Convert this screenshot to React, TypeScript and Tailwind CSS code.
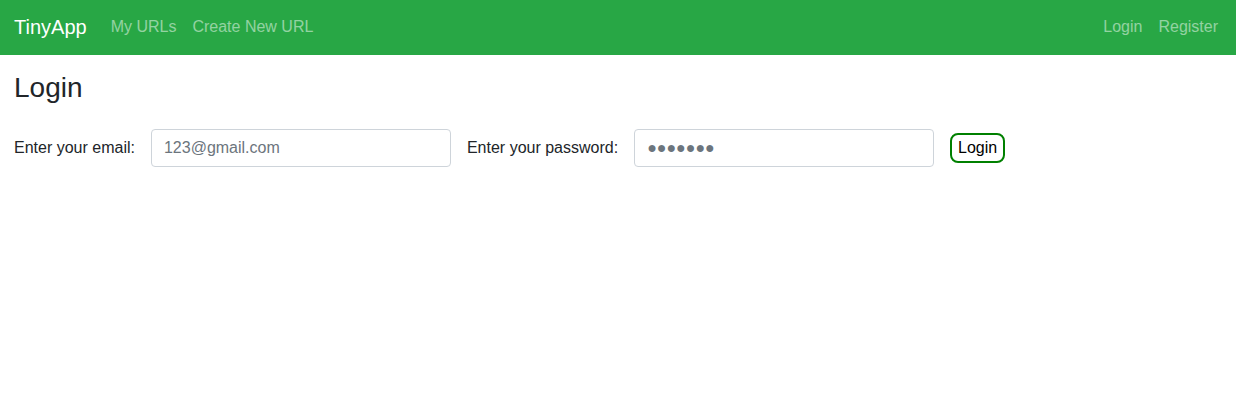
const NAV_LINK = "text-base text-white/50 hover:text-white/75";

const Navbar = () => {
  return (
    <nav className="flex h-[55px] w-full items-center justify-between bg-[#28a745] pb-[2px] pl-[14px] pr-[18px]">
      <div className="flex items-center">
        <a href="#" className="mr-6 text-xl text-white">
          TinyApp
        </a>
        <div className="flex items-center gap-4">
          <a href="#" className={NAV_LINK}>
            My URLs
          </a>
          <a href="#" className={NAV_LINK}>
            Create New URL
          </a>
        </div>
      </div>
      <div className="flex items-center gap-4">
        <a href="#" className={NAV_LINK}>
          Login
        </a>
        <a href="#" className={NAV_LINK}>
          Register
        </a>
      </div>
    </nav>
  );
};

const App = () => {
  return (
    <div
      className="min-h-[405px] bg-white text-[#212529]"
      style={{ fontFamily: '"Liberation Sans", Arial, sans-serif' }}
    >
      <Navbar />
      <main className="px-[14px] pt-[16px]">
        <h3 className="mb-[24px] text-[28px] leading-[1.2]">Login</h3>
        <form className="flex items-center" onSubmit={(e) => e.preventDefault()}>
          <label className="mr-4 text-base">Enter your email:</label>
          <input
            type="email"
            placeholder="123@gmail.com"
            className="mr-4 h-[38px] w-[300px] rounded border border-[#ced4da] px-3 text-base text-[#495057] outline-none placeholder:text-[#6c757d]"
          />
          <label className="mr-4 text-base">Enter your password:</label>
          <input
            type="password"
            placeholder="●●●●●●●"
            className="mr-4 h-[38px] w-[300px] rounded border border-[#ced4da] px-3 text-base text-[#495057] outline-none placeholder:text-[#6c757d]"
          />
          <button
            type="submit"
            className="h-[30px] w-[55px] rounded-lg border-2 border-[#008000] text-base text-black"
          >
            Login
          </button>
        </form>
      </main>
    </div>
  );
};

export default App;
